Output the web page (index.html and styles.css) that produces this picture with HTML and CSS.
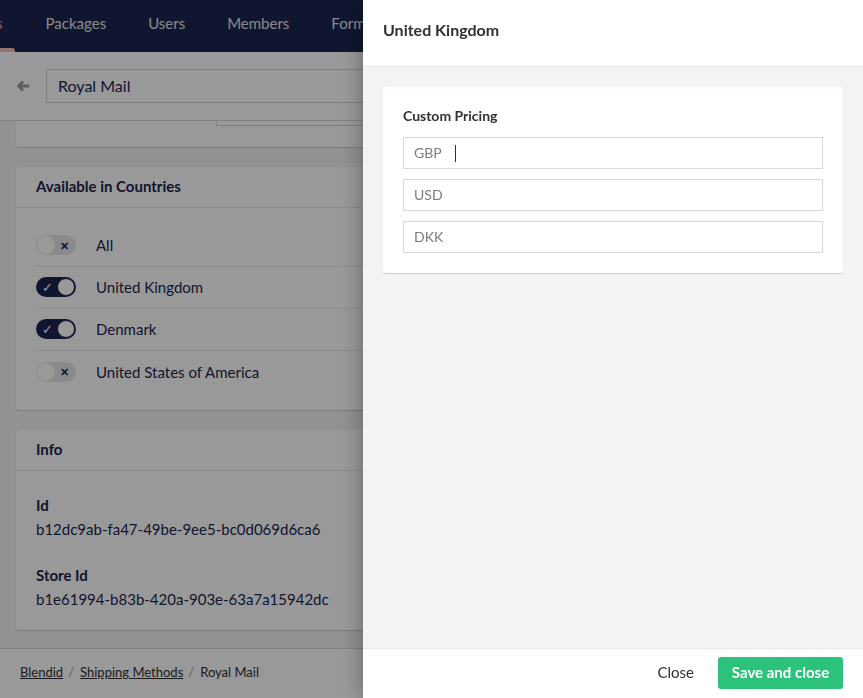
FILE: index.html
```html
<!DOCTYPE html>
<html lang="en">
<head>
<meta charset="utf-8">
<title>Royal Mail</title>
<link rel="stylesheet" href="styles.css">
</head>
<body>
<div class="app">
  <header class="topbar">
    <nav class="sections">
      <a class="section active">Settings</a>
      <a class="section">Packages</a>
      <a class="section">Users</a>
      <a class="section">Members</a>
      <a class="section">Forms</a>
      <a class="section">Translation</a>
    </nav>
  </header>
  <div class="editor">
    <div class="editor-header">
      <svg class="back" width="14" height="12" viewBox="0 0 14 12"><path d="M6 0.5 L0.8 6 L6 11.5 L8 9.6 L5.6 7.4 H13.2 V4.6 H5.6 L8 2.4 Z" fill="#9b9aa3"/></svg>
      <div class="name-input">Royal Mail</div>
    </div>
    <div class="editor-content">
      <div class="card card-stub">
        <div class="stub-box"></div>
      </div>
      <div class="card">
        <div class="card-head">Available in Countries</div>
        <div class="card-body countries">
          <div class="row"><span class="toggle off"><span class="knob"></span><span class="x">✕</span></span><span>All</span></div>
          <div class="row"><span class="toggle on"><span class="tick">✓</span><span class="knob"></span></span><span>United Kingdom</span></div>
          <div class="row"><span class="toggle on"><span class="tick">✓</span><span class="knob"></span></span><span>Denmark</span></div>
          <div class="row"><span class="toggle off"><span class="knob"></span><span class="x">✕</span></span><span>United States of America</span></div>
        </div>
      </div>
      <div class="card">
        <div class="card-head">Info</div>
        <div class="card-body info">
          <div class="prop">
            <div class="prop-label">Id</div>
            <div class="prop-value">b12dc9ab-fa47-49be-9ee5-bc0d069d6ca6</div>
          </div>
          <div class="prop">
            <div class="prop-label">Store Id</div>
            <div class="prop-value">b1e61994-b83b-420a-903e-63a7a15942dc</div>
          </div>
        </div>
      </div>
    </div>
    <footer class="editor-footer">
      <a class="crumb link">Blendid</a><span class="sep">/</span><a class="crumb link">Shipping Methods</a><span class="sep">/</span><span class="crumb">Royal Mail</span>
    </footer>
  </div>
</div>
<div class="overlay"></div>
<aside class="panel">
  <div class="panel-header">United Kingdom</div>
  <div class="panel-body">
    <div class="panel-card">
      <div class="panel-label">Custom Pricing</div>
      <div class="field"><span class="ph">GBP</span><span class="caret"></span></div>
      <div class="field"><span class="ph">USD</span></div>
      <div class="field"><span class="ph">DKK</span></div>
    </div>
  </div>
  <div class="panel-footer">
    <button class="btn-link">Close</button>
    <button class="btn-save">Save and close</button>
  </div>
</aside>
</body>
</html>
```
FILE: styles.css
```css
* { box-sizing: border-box; }
html, body { margin: 0; height: 100%; }
body {
  font-family: Lato, "Open Sans", sans-serif;
  color: #303033;
  background: #f3f3f5;
  overflow: hidden;
}
.app { display: flex; flex-direction: column; height: 698px; }

.topbar { height: 52px; background: #1b264f; flex: none; overflow: hidden; }
.sections { display: flex; height: 52px; margin-left: -71px; }
.section {
  position: relative;
  display: flex; align-items: center;
  padding: 0 21px 6px;
  font-size: 15px;
  color: #e2e3ea;
  white-space: nowrap;
}
.section.active { color: #f5a36a; padding-right: 22px; }
.section.active::after {
  content: ""; position: absolute; left: 10px; right: 10px; bottom: 0;
  height: 4px; background: #f5c1bc; border-radius: 3px 3px 0 0;
}

.editor { flex: 1; display: flex; flex-direction: column; min-height: 0; }
.editor-header {
  height: 69px; flex: none; background: #fff;
  border-bottom: 1px solid #d8d7d9;
  display: flex; align-items: center; padding: 0 0 1px 16px;
}
.back { flex: none; margin-right: 16px; margin-top: 1px; }
.name-input {
  flex: 1; height: 34px; border: 1px solid #d8d7d9;
  display: flex; align-items: center; padding-left: 11px;
  font-size: 16px; color: #1b264f;
}

.editor-content { flex: 1; padding: 0 0 0 16px; overflow: hidden; }
.card {
  background: #fff; border-radius: 3px;
  box-shadow: 0 1px 1px rgba(0,0,0,0.16);
  margin-bottom: 20px;
}
.card-stub { height: 26px; border-radius: 0 0 3px 3px; padding-left: 200px; margin-bottom: 20px; }
.stub-box { height: 5px; border: 1px solid #d8d7d9; border-top: none; }
.card-head {
  height: 41px; border-bottom: 1px solid #e9e9eb;
  display: flex; align-items: center; padding: 0 20px 2px;
  font-size: 15px; font-weight: 700; color: #1b264f;
}
.countries { padding: 17px 0 17px 20px; }
.row {
  height: 42px; display: flex; align-items: center;
  border-bottom: 1px solid #e9e9eb;
  font-size: 15px; color: #1b264f;
  padding-bottom: 1px;
}
.row:last-child { border-bottom: none; }
.toggle {
  position: relative; flex: none;
  width: 40px; height: 20px; border-radius: 10px; margin-right: 20px;
  display: flex; align-items: center; justify-content: space-between; padding: 0 1px;
}
.toggle.off { background: #e6e6e9; }
.toggle.on { background: #1b264f; }
.knob { width: 18px; height: 18px; border-radius: 50%; background: #fff; }
.toggle.on .knob { border: 1px solid #1b264f; }
.x { font-size: 11px; line-height: 1; color: #1b264f; font-weight: 700; margin-right: 6px; }
.tick { font-size: 13px; line-height: 1; color: #fff; margin-left: 5px; }

.info { padding: 24px 20px 21px; }
.prop + .prop { margin-top: 26px; }
.prop-label { font-size: 15px; font-weight: 700; line-height: 20px; color: #1b264f; }
.prop-value { font-size: 15px; line-height: 20px; margin-top: 4px; color: #1b264f; }

.editor-footer {
  height: 50px; flex: none; background: #fff;
  border-top: 1px solid #d8d7d9;
  display: flex; align-items: center; padding: 0 20px 3px;
  font-size: 13px; color: #303033;
}
.crumb.link { text-decoration: underline; color: #303033; }
.sep { color: #a2a1a6; margin: 0 6px 0 5px; }

.overlay {
  position: fixed; inset: 0;
  background: rgba(0,0,0,0.4);
}

.panel {
  position: fixed; top: 0; right: 0; bottom: 0; width: 500px;
  background: #f4f2f2;
  display: flex; flex-direction: column;
  box-shadow: 0 0 22px rgba(0,0,0,0.35);
}
.panel-header {
  height: 67px; flex: none; background: #fff;
  border-bottom: 1px solid #e9e9eb;
  padding: 0 20px 8px; display: flex; align-items: center;
  font-size: 16px; font-weight: 700; color: #303033;
}
.panel-body { flex: 1; padding: 20px; }
.panel-card {
  background: #fff; border-radius: 3px;
  box-shadow: 0 1px 1px rgba(0,0,0,0.16);
  padding: 20px 20px 20px;
  display: flex; flex-direction: column; gap: 10px;
}
.panel-label { font-size: 14px; font-weight: 700; line-height: 18px; margin: 0 0 2px; color: #303033; }
.field {
  height: 32px; border: 1px solid #d8d7d9;
  display: flex; align-items: center; padding: 0 0 2px 10px;
  font-size: 14px;
}
.ph { color: #7b7a7f; }
.caret { width: 1px; height: 17px; background: #303033; margin-left: 13px; margin-top: 2px; }

.panel-footer {
  height: 50px; flex: none; background: #fff;
  border-top: 1px solid #e9e9eb;
  display: flex; align-items: center; justify-content: flex-end;
  padding: 0 20px 1px; gap: 24px;
}
.btn-link {
  border: none; background: none; padding: 0 0 3px;
  font-family: inherit; font-size: 15px; color: #303033;
}
.btn-save {
  border: none; border-radius: 3px; background: #2bc37c;
  height: 32px; width: 125px; padding: 0 0 3px;
  font-family: inherit; font-size: 15px; font-weight: 700; color: #fff;
}
```
